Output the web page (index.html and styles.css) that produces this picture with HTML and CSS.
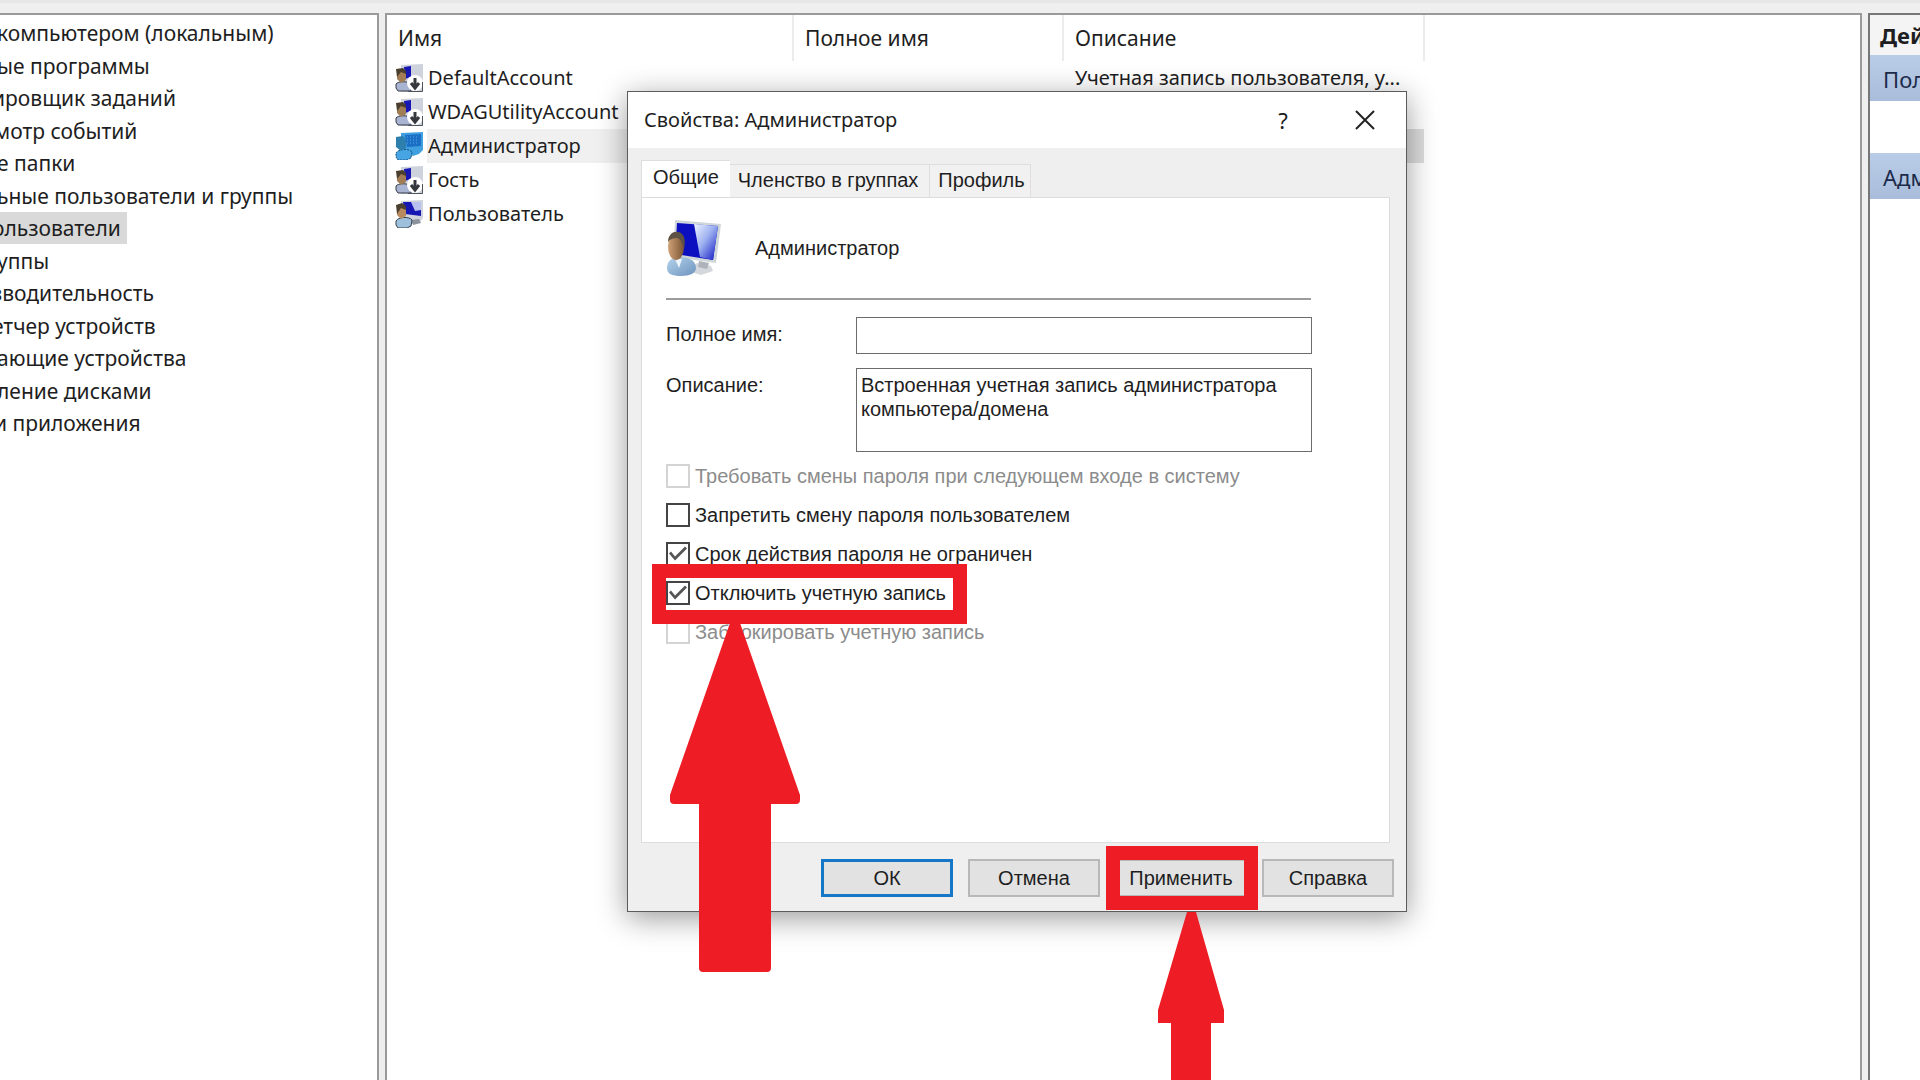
FILE: index.html
```html
<!DOCTYPE html>
<html lang="ru">
<head>
<meta charset="utf-8">
<title>Управление компьютером</title>
<link rel="stylesheet" href="styles.css">
</head>
<body>
<svg class="defs" aria-hidden="true">
  <defs>
    <linearGradient id="shine" x1="0" y1="0" x2="1" y2="1">
      <stop offset="0" stop-color="#eef3ff"/><stop offset="0.45" stop-color="#9fb2f0"/><stop offset="1" stop-color="#0a12c4"/>
    </linearGradient>
    <linearGradient id="shirt" x1="0" y1="0" x2="1" y2="1">
      <stop offset="0" stop-color="#b5d3ec"/><stop offset="1" stop-color="#6d93bd"/>
    </linearGradient>
    <linearGradient id="skin" x1="0" y1="0" x2="1" y2="0">
      <stop offset="0" stop-color="#d0a277"/><stop offset="1" stop-color="#7b5433"/>
    </linearGradient>
    <symbol id="user-large" viewBox="0 0 56 56">
      <path d="M31 43l14 3 2 5-12 4-14-4z" fill="#d4d7dc"/>
      <path d="M33 41l10 2-2 6-9-2z" fill="#aeb3ba"/>
      <path d="M9 0l46 4-5 39-43-6z" fill="#cfd6da"/>
      <path d="M11 3l41 3-5 34-38-6z" fill="#0b0fc0"/>
      <path d="M28 4l24 2-5 34-13-3z" fill="url(#shine)"/>
      <path d="M1 48c0-7 5-11 12-11s17 2 17 11c0 5-6 8-15 8S1 54 1 48z" fill="url(#shirt)"/>
      <path d="M9 39l4 9 3-9z" fill="#eef5fb"/>
      <ellipse cx="10" cy="27" rx="8" ry="13" fill="url(#skin)"/>
      <path d="M2 22c0-8 6-11 10-10 6 1 8 7 6 17-2-6-3-10-7-11-4 0-7 1-9 4z" fill="#5d5243"/>
    </symbol>
    <symbol id="user-small" viewBox="0 0 28 28">
      <path d="M6 1l22-1v18l-4 5-9 1-9-7z" fill="#cfd3dc"/>
      <path d="M8 2l18 0v14l-16-2z" fill="#1717b4"/>
      <path d="M16 2h10v8l-6 1z" fill="#b9c2ee"/>
      <path d="M16 20l8-1 2 4-8 2z" fill="#8d939c"/>
      <path d="M1 21c2-4 13-5 16-1l-1 6-4 2H3l-2-3z" fill="#9fc0dd" stroke="#34424f"/>
      <path d="M2 6l6-2 3 4v8l-5 3-4-4z" fill="#b68a5e"/>
      <path d="M1 5l6-2 4 3v4L6 8l-4 6z" fill="#4a3f2f"/>
    </symbol>
    <symbol id="user-disabled" viewBox="0 0 28 28">
      <path d="M6 1l22-1v28H6z" fill="#cdd2dd"/>
      <path d="M9 3l7-1v11l-6 2z" fill="#1717b4"/>
      <path d="M1 20c2-3 12-3 15 0v7H3l-2-3z" fill="#a9b4d2" stroke="#353b44"/>
      <path d="M2 6l7-1 2 4v7l-5 3-4-4z" fill="#a07d54"/>
      <path d="M1 5l7-1 3 3v3L6 8l-4 5z" fill="#4a3f2f"/>
      <circle cx="20" cy="19" r="8" fill="#fff"/>
      <path d="M20 14v9M16 19l4 5 4-5" fill="none" stroke="#35383c" stroke-width="3"/>
      <path d="M13 27.500h14.500V18" fill="none" stroke="#4d535b"/>
    </symbol>
    <symbol id="user-selected" viewBox="0 0 28 28">
      <path d="M6 1l22-1v18l-4 4-6 2-12-7z" fill="#3f9fdf"/>
      <path d="M10 3l16-1v12l-14 1z" fill="#1b6fc4"/>
      <path d="M12 5h12M12 8h12M12 11h12" stroke="#55aae6" stroke-dasharray="1 2"/>
      <path d="M1 21c2-4 13-5 16-1l-1 6-4 2H3l-2-3z" fill="#46a5e2" stroke="#17507f" stroke-dasharray="2 1"/>
      <path d="M1 5l7-1 3 4v8l-5 3-5-4z" fill="#2d7fae"/>
    </symbol>
  </defs>
</svg>

<div class="toolbar-edge"></div>
<main class="console">
  <nav class="pane tree" aria-label="Дерево консоли">
    <ul class="tree-list">
      <li>компьютером (локальным)</li>
      <li>ые программы</li>
      <li class="deep">ировщик заданий</li>
      <li class="middle">мотр событий</li>
      <li>е папки</li>
      <li>ьные пользователи и группы</li>
      <li class="deep"><span class="current">ользователи</span></li>
      <li>уппы</li>
      <li class="deep">зводительность</li>
      <li class="deep">етчер устройств</li>
      <li>ающие устройства</li>
      <li>ление дисками</li>
      <li class="middle">и приложения</li>
    </ul>
  </nav>

  <section class="pane list">
    <table class="users">
      <colgroup><col class="col-name"><col class="col-full"><col class="col-desc"></colgroup>
      <thead>
        <tr><th>Имя</th><th>Полное имя</th><th>Описание</th></tr>
      </thead>
      <tbody>
        <tr><td><div class="user"><svg class="user-icon"><use href="#user-disabled"/></svg><span>DefaultAccount</span></div></td><td></td><td>Учетная запись пользователя, у...</td></tr>
        <tr><td><div class="user"><svg class="user-icon"><use href="#user-disabled"/></svg><span>WDAGUtilityAccount</span></div></td><td></td><td></td></tr>
        <tr class="selected"><td><div class="user"><svg class="user-icon"><use href="#user-selected"/></svg><span>Администратор</span></div></td><td></td><td></td></tr>
        <tr><td><div class="user"><svg class="user-icon"><use href="#user-disabled"/></svg><span>Гость</span></div></td><td></td><td></td></tr>
        <tr><td><div class="user"><svg class="user-icon"><use href="#user-small"/></svg><span>Пользователь</span></div></td><td></td><td></td></tr>
      </tbody>
    </table>
  </section>

  <aside class="pane actions">
    <h2 class="actions-title">Действия</h2>
    <h3 class="actions-group">Пользователи</h3>
    <h3 class="actions-group">Администратор</h3>
  </aside>
</main>

<section class="dialog" role="dialog" aria-labelledby="dialog-title">
  <header class="titlebar">
    <h1 id="dialog-title">Свойства: Администратор</h1>
    <button class="caption" type="button" aria-label="Справка по окну">?</button>
    <button class="caption" type="button" aria-label="Закрыть"><svg width="20" height="20" viewBox="0 0 20 20"><path d="M1 1l18 18M19 1L1 19" stroke="#222" stroke-width="2"/></svg></button>
  </header>
  <form class="dialog-body">
    <div class="tabs" role="tablist">
      <button class="tab active" type="button" role="tab" aria-selected="true">Общие</button>
      <button class="tab" type="button" role="tab">Членство в группах</button>
      <button class="tab" type="button" role="tab">Профиль</button>
    </div>
    <div class="panel" role="tabpanel">
      <div class="identity">
        <svg class="identity-icon"><use href="#user-large"/></svg>
        <span>Администратор</span>
      </div>
      <div class="fields">
        <label for="full-name">Полное имя:</label>
        <input id="full-name" class="box" type="text">
        <label for="description">Описание:</label>
        <textarea id="description" class="box">Встроенная учетная запись администратора компьютера/домена</textarea>
      </div>
      <div class="options">
        <label class="option off"><input type="checkbox" disabled>Требовать смены пароля при следующем входе в систему</label>
        <label class="option"><input type="checkbox">Запретить смену пароля пользователем</label>
        <label class="option"><input type="checkbox" checked>Срок действия пароля не ограничен</label>
        <label class="option"><input type="checkbox" checked>Отключить учетную запись</label>
        <label class="option off"><input type="checkbox" disabled>Заблокировать учетную запись</label>
      </div>
    </div>
    <div class="buttons">
      <button class="push default" type="button">ОК</button>
      <button class="push" type="button">Отмена</button>
      <button class="push" type="button">Применить</button>
      <button class="push" type="button">Справка</button>
    </div>
  </form>
  <div class="mark mark-disable"></div>
  <div class="mark mark-apply"></div>
  <svg class="arrow arrow-disable" viewBox="0 0 130 352"><path d="M60 0h10l60 172v5q0 4-4 4h-25v164q0 4-4 4H33q-4 0-4-4V181H4q-4 0-4-4v-5z"/></svg>
  <svg class="arrow arrow-apply" viewBox="0 0 66 168"><path d="M29 0h9l28 98v13H53v57H13v-57H0V98z"/></svg>
</section>
</body>
</html>
```
FILE: styles.css
```css
* { box-sizing: border-box; }

body {
  margin: 0;
  min-height: 100vh;
  display: flex;
  flex-direction: column;
  position: relative;
  overflow: hidden;
  background: #efefef;
  color: #1e1e22;
  font: 20px/34px "Noto Sans", "Open Sans", sans-serif;
}

.defs { position: absolute; width: 0; height: 0; }

.toolbar-edge { height: 13px; border-top: 3px solid #e7e7e7; }

/* Console panes */
.console {
  flex: 1;
  display: grid;
  grid-template-columns: 379px 1fr 52px;
  gap: 6px;
}
.pane {
  min-width: 0;
  overflow: hidden;
  background: #fff;
  border: 2px solid #9a9a9a;
  border-bottom: 0;
}

.tree { border-left: 0; }
.tree-list {
  display: grid;
  grid-auto-rows: 1fr;
  height: 423px;
  margin: 2px 0 0;
  padding: 0;
  list-style: none;
  font-size: 21px;
  line-height: 32px;
  white-space: nowrap;
}
.tree-list li { margin-left: -3px; }
.tree-list .middle { margin-left: -6px; }
.tree-list .deep { margin-left: -8px; }
.current { display: inline-block; padding-right: 6px; background: #d9d9d9; }

.users { table-layout: fixed; width: 1038px; border-collapse: collapse; }
.col-name { width: 406px; }
.col-full { width: 270px; }
.users th {
  height: 46px;
  padding: 0 11px;
  border-right: 2px solid #ececec;
  font-size: 21px;
  font-weight: 400;
  text-align: left;
}
.users td { height: 34px; padding: 0 0 0 12px; white-space: nowrap; }
.users td:first-child { padding-left: 8px; }
.user { display: flex; align-items: center; gap: 4px; }
.user span { flex: 1; padding-left: 1px; }
.user-icon { width: 28px; height: 28px; }
.selected span, .selected td + td { background: #f0f0f0; }
.selected td:last-child { background: #dedede; }

.actions { border: 2px solid #777; border-width: 2px 0 0 2px; white-space: nowrap; }
.actions h2, .actions h3 { margin: 0; padding-left: 13px; font-size: 22px; }
.actions .actions-title { height: 40px; padding-left: 10px; background: #f4f4f4; line-height: 40px; }
.actions .actions-group {
  height: 46px;
  margin-bottom: 52px;
  background: linear-gradient(#b9cde8, #a9bddb);
  color: #1c2a4a;
  font-weight: 400;
  line-height: 48px;
}

/* Properties window */
.dialog {
  position: absolute;
  left: 627px;
  top: 91px;
  width: 780px;
  border: 1px solid #5c5c5c;
  background: #efefef;
  box-shadow: 0 6px 28px rgba(0, 0, 0, 0.4);
}
.dialog button { font-family: inherit; color: inherit; }

.titlebar { display: flex; align-items: center; height: 56px; padding-left: 16px; background: #fff; }
.titlebar h1 { flex: 1; margin: 0; font-size: 20px; font-weight: 400; }
.caption {
  display: grid;
  place-items: center;
  width: 82px;
  height: 54px;
  padding: 0;
  border: 0;
  background: none;
  font-size: 22px;
}

.dialog-body {
  padding: 12px 12px 14px 13px;
  font: 20px/24px "Liberation Sans", Arial, sans-serif;
}
.tabs { display: flex; align-items: flex-end; }
.tab {
  height: 33px;
  padding: 0 11px 3px 8px;
  border: 1px solid #dedede;
  border-width: 1px 1px 0 0;
  background: #f1f1f1;
  font-size: 20px;
  line-height: 24px;
}
.tab + .tab + .tab { padding-right: 5px; }
.tab.active { height: 37px; padding: 0 11px 5px; border-width: 1px 0 0 1px; background: #fff; }

.panel {
  min-height: 646px;
  margin-right: 4px;
  padding: 22px 24px;
  border: 1px solid #dcdcdc;
  background: #fff;
}
.identity {
  display: flex;
  align-items: center;
  gap: 33px;
  width: 645px;
  padding-bottom: 22px;
  border-bottom: 2px solid #9c9c9c;
}
.identity-icon { width: 56px; height: 56px; }

.fields {
  display: grid;
  grid-template-columns: 190px 456px;
  gap: 14px 0;
  margin-top: 17px;
}
.fields label { padding-top: 5px; }
.box {
  height: 37px;
  margin: 0;
  padding: 4px;
  border: 1px solid #6c6c6c;
  border-radius: 0;
  background: #fff;
  color: inherit;
  font: inherit;
  resize: none;
  outline: 0;
  overflow: hidden;
}
textarea.box { height: 84px; }

.options { display: grid; grid-auto-rows: 39px; margin-top: 4px; }
.option { display: flex; align-items: center; gap: 5px; }
.option.off { color: #8c8c8c; }
.option input {
  appearance: none;
  width: 24px;
  height: 24px;
  margin: 0;
  border: 2px solid #444;
  background: #fff;
}
.option input:disabled { border-color: #d4d4d4; }
.option input:checked::before {
  content: "";
  display: block;
  width: 20px;
  height: 20px;
  background: #555;
  clip-path: polygon(1px 10px, 3px 8px, 7px 13px, 17px 3px, 19px 5px, 7px 17px);
}

.buttons { display: flex; justify-content: flex-end; gap: 15px; margin-top: 16px; }
.push {
  width: 132px;
  height: 38px;
  padding: 0;
  border: 2px solid #b8b8b8;
  background: #e2e2e2;
  font-size: 20px;
}
.push.default { border: 3px solid #1577c6; }

/* Red annotations over the window */
.mark { position: absolute; border: 14px solid #ee1c25; pointer-events: none; }
.mark-disable { left: 24px; top: 472px; width: 315px; height: 60px; }
.mark-apply { left: 478px; top: 754px; width: 152px; height: 64px; }
.arrow { position: absolute; fill: #ee1c25; pointer-events: none; }
.arrow-disable { left: 42px; top: 531px; width: 130px; height: 352px; }
.arrow-apply { left: 530px; top: 820px; width: 66px; height: 168px; }
```
